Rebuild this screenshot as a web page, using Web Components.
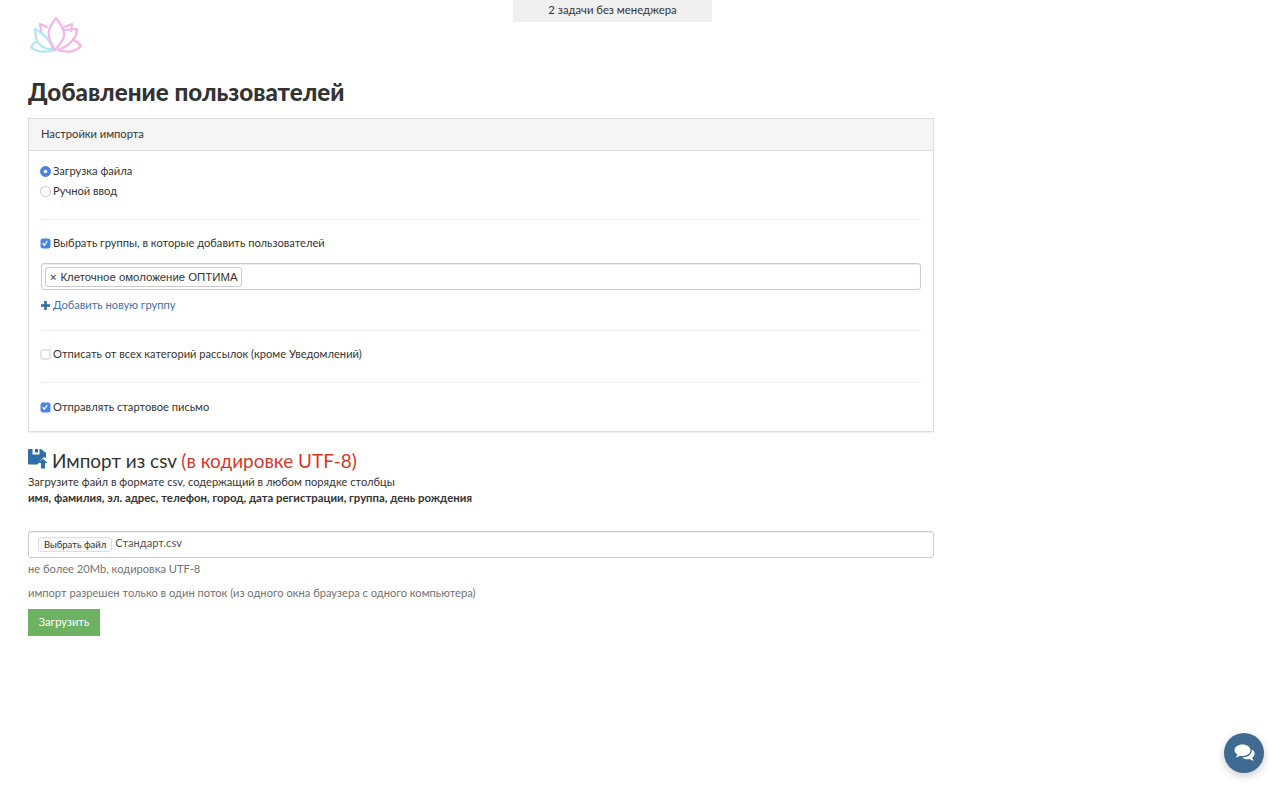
<!DOCTYPE html>
<html lang="ru">
<head>
<meta charset="utf-8">
<title>Добавление пользователей</title>
<style>
    html, body {
        margin: 0;
        background: #fff;
    }
    body {
        font-family: Lato, "Liberation Sans", sans-serif;
        font-size: 11.15px;
        color: #333;
    }
</style>
</head>
<body>
<import-page>
    <task-banner slot="banner">2 задачи без менеджера</task-banner>
    <brand-logo slot="logo"></brand-logo>
    <span slot="title">Добавление пользователей</span>

    <settings-panel heading="Настройки импорта">
        <section-block gap="18">
            <check-row type="radio" checked>Загрузка файла</check-row>
            <check-row type="radio">Ручной ввод</check-row>
        </section-block>
        <section-block gap="14" top="13">
            <check-row type="checkbox" checked>Выбрать группы, в которые добавить пользователей</check-row>
            <tag-input tag="Клеточное омоложение ОПТИМА"></tag-input>
            <add-link>Добавить новую группу</add-link>
        </section-block>
        <section-block gap="18" top="13">
            <check-row type="checkbox">Отписать от всех категорий рассылок (кроме Уведомлений)</check-row>
        </section-block>
        <section-block top="14">
            <check-row type="checkbox" checked>Отправлять стартовое письмо</check-row>
        </section-block>
    </settings-panel>

    <import-form></import-form>
    <chat-button slot="overlay"></chat-button>
</import-page>

<script>
class ImportPage extends HTMLElement {
    constructor() {
        super();
        this.attachShadow({ mode: 'open' });
        this.shadowRoot.innerHTML = `
            <style>
                :host {
                    display: block;
                    padding: 0 346px 0 28px;
                    min-height: 785px;
                    box-sizing: border-box;
                }
                .logo {
                    height: 64px;
                }
                h1 {
                    margin: 0;
                    height: 54px;
                    font-size: 24.2px;
                    line-height: 56px;
                    font-weight: 900;
                    color: #333;
                }
            </style>
            <slot name="banner"></slot>
            <div class="logo"><slot name="logo"></slot></div>
            <h1><slot name="title"></slot></h1>
            <slot></slot>
            <slot name="overlay"></slot>
        `;
    }
}

class TaskBanner extends HTMLElement {
    constructor() {
        super();
        this.attachShadow({ mode: 'open' });
        this.shadowRoot.innerHTML = `
            <style>
                :host {
                    position: absolute;
                    top: 0;
                    left: 513px;
                    width: 199px;
                    height: 22px;
                    background: #f0f0f0;
                    font-size: 11.3px;
                    line-height: 20px;
                    text-align: center;
                    color: #333;
                }
            </style>
            <slot></slot>
        `;
    }
}

class BrandLogo extends HTMLElement {
    constructor() {
        super();
        this.attachShadow({ mode: 'open' });
        this.shadowRoot.innerHTML = `
            <style>
                :host {
                    display: block;
                    padding-top: 15px;
                }
                svg {
                    display: block;
                    margin-left: 1px;
                }
            </style>
            <svg width="54" height="42" viewBox="29 15 54 42" fill="none" stroke-width="2.2" stroke-linejoin="round" stroke-linecap="round">
                <g stroke="#aee6f2">
                    <path d="M35 29 C41 32 49 37 53 49 C46 50 38 46 36 38 Z"/>
                    <path d="M37 41 C34 43 32 45 31 47 C36 52 46 53 54 50"/>
                </g>
                <g stroke="#f5b5e6">
                    <path d="M56 18 C51 24 47 30 49 37 C50 42 53 46 55 50 C58 46 63 42 64 36 C65 30 60 23 56 18 Z"/>
                    <path d="M47 27 L40 24 L41 31"/>
                    <path d="M64 27 L72 24 L71 31"/>
                    <path d="M65 30 L77 29 C77 37 70 46 58 50"/>
                    <path d="M73 40 C76 41 79 43 81 46 C76 52 66 53 58 50"/>
                </g>
            </svg>
        `;
    }
}

class SettingsPanel extends HTMLElement {
    constructor() {
        super();
        this.attachShadow({ mode: 'open' });
        const heading = this.getAttribute('heading') || '';
        this.shadowRoot.innerHTML = `
            <style>
                :host {
                    display: block;
                    border: 1px solid #ddd;
                    box-shadow: 0 1px 1px rgba(0, 0, 0, .05);
                }
                header {
                    height: 31px;
                    padding: 0 12px;
                    background: #f5f5f5;
                    border-bottom: 1px solid #ddd;
                    line-height: 30px;
                    color: #333;
                }
                .body {
                    padding: 10px 12px 14px;
                }
            </style>
            <header>${heading}</header>
            <div class="body"><slot></slot></div>
        `;
    }
}

class SectionBlock extends HTMLElement {
    constructor() {
        super();
        this.attachShadow({ mode: 'open' });
        const gap = this.getAttribute('gap');
        const top = this.getAttribute('top') || 0;
        this.shadowRoot.innerHTML = `
            <style>
                :host {
                    display: block;
                    padding-top: ${top}px;
                    padding-bottom: ${gap || 0}px;
                    ${gap ? 'border-bottom: 1px solid #eee;' : ''}
                }
            </style>
            <slot></slot>
        `;
    }
}

class CheckRow extends HTMLElement {
    constructor() {
        super();
        this.attachShadow({ mode: 'open' });
        const isRadio = this.getAttribute('type') === 'radio';
        const checked = this.hasAttribute('checked');
        let mark = '';
        if (checked && isRadio) {
            mark = '<circle cx="5.5" cy="5.5" r="1.8" fill="#fff"/>';
        } else if (checked) {
            mark = '<path d="M2.6 5.2 L4.4 7.2 L7.2 3" fill="none" stroke="#fff" stroke-width="1.3"/>';
        }
        const fill = checked ? '#4a82e6' : '#fff';
        const stroke = checked ? '#4a82e6' : '#c9c9c9';
        const shape = isRadio
            ? `<circle cx="5.5" cy="5.5" r="5" fill="${fill}" stroke="${stroke}"/>`
            : `<rect x="1" y="1" width="9" height="9" rx="1.5" fill="${fill}" stroke="${stroke}"/>`;
        this.shadowRoot.innerHTML = `
            <style>
                :host {
                    display: flex;
                    align-items: center;
                    gap: 2px;
                    height: 20px;
                }
                svg {
                    flex: none;
                    width: 11px;
                    height: 11px;
                    margin-left: -1px;
                }
                span {
                    padding-bottom: 2px;
                }
            </style>
            <svg viewBox="0 0 11 11">${shape}${mark}</svg>
            <span><slot></slot></span>
        `;
    }
}

class TagInput extends HTMLElement {
    constructor() {
        super();
        this.attachShadow({ mode: 'open' });
        const tag = this.getAttribute('tag') || '';
        this.shadowRoot.innerHTML = `
            <style>
                :host {
                    display: flex;
                    align-items: center;
                    height: 27px;
                    margin-top: 10px;
                    padding: 0 3px;
                    box-sizing: border-box;
                    border: 1px solid #ccc;
                    border-radius: 3px;
                    box-shadow: inset 0 1px 1px rgba(0, 0, 0, .075);
                }
                .tag {
                    display: flex;
                    align-items: center;
                    gap: 4px;
                    height: 18px;
                    padding: 0 3px 0 4px;
                    border: 1px solid #ccc;
                    border-radius: 3px;
                    font-family: "Liberation Sans", sans-serif;
                    font-size: 11.4px;
                }
                .x {
                    font-weight: 700;
                    font-size: 11px;
                    color: #666;
                }
            </style>
            <span class="tag"><span class="x">×</span>${tag}</span>
        `;
    }
}

class AddLink extends HTMLElement {
    constructor() {
        super();
        this.attachShadow({ mode: 'open' });
        this.shadowRoot.innerHTML = `
            <style>
                :host {
                    display: flex;
                    align-items: center;
                    gap: 3px;
                    height: 20px;
                    margin-top: 6px;
                    padding-bottom: 0;
                    color: #3a74ad;
                }
                svg {
                    width: 9px;
                    height: 9px;
                    margin-bottom: 2px;
                }
                span {
                    padding-bottom: 3px;
                }
            </style>
            <svg viewBox="0 0 9 9"><path d="M3.2 0h2.6v3.2H9v2.6H5.8V9H3.2V5.8H0V3.2h3.2z" fill="#2f6ea8"/></svg>
            <span><slot></slot></span>
        `;
    }
}

class ImportForm extends HTMLElement {
    constructor() {
        super();
        this.attachShadow({ mode: 'open' });
        this.shadowRoot.innerHTML = `
            <style>
                :host {
                    display: block;
                    margin-top: 17px;
                }
                h2 {
                    display: flex;
                    align-items: flex-start;
                    gap: 5px;
                    margin: 0 0 1px;
                    height: 24px;
                    font-size: 18.95px;
                    line-height: 24px;
                    font-weight: 400;
                    color: #333;
                }
                h2 em {
                    font-style: normal;
                    color: #d9362b;
                }
                h2 svg {
                    flex: none;
                    width: 19px;
                    height: 20px;
                }
                p {
                    margin: 0;
                    line-height: 16px;
                }
                b {
                    font-weight: 700;
                    font-size: 11.35px;
                    display: block;
                }
                .file {
                    display: flex;
                    align-items: flex-start;
                    gap: 3px;
                    height: 27px;
                    margin-top: 25px;
                    padding: 3px 9px 0;
                    box-sizing: border-box;
                    border: 1px solid #ccc;
                    border-radius: 3px;
                    box-shadow: inset 0 1px 1px rgba(0, 0, 0, .075);
                    line-height: 15px;
                    color: #555;
                }
                .file span {
                    height: 13px;
                    margin-top: 2px;
                    padding: 0 5px;
                    border: 1px solid #ddd;
                    border-radius: 3px;
                    background: #f8f8f8;
                    font-size: 9.45px;
                    line-height: 13px;
                    color: #333;
                }
                .hint {
                    margin-top: 3px;
                    line-height: 16px;
                    color: #737373;
                }
                .hint + .hint {
                    margin-top: 8px;
                }
                button {
                    display: block;
                    width: 72px;
                    height: 27px;
                    margin-top: 8px;
                    padding: 0 0 2px;
                    border: 0;
                    background: #6db262;
                    font: inherit;
                    color: #fff;
                }
            </style>
            <h2>
                <svg viewBox="0 0 19 20">
                    <path d="M0 1 Q0 0 1 0 H4.5 V5.5 H11.5 V0 H13 L18 4 V8.5 H15 L9.5 15.5 H1 Q0 15.5 0 14.5 Z" fill="#2f6ea8"/>
                    <rect x="7" y="0" width="3" height="3.5" fill="#2f6ea8"/>
                    <path d="M15 9.5 L19.5 14 H17 V19.5 H13 V14 H10.5 Z" fill="#2f6ea8"/>
                </svg>
                <span>Импорт из csv <em>(в кодировке UTF-8)</em></span>
            </h2>
            <p>Загрузите файл в формате csv, содержащий в любом порядке столбцы<b>имя, фамилия, эл. адрес, телефон, город, дата регистрации, группа, день рождения</b></p>
            <div class="file"><span>Выбрать файл</span>Стандарт.csv</div>
            <div class="hint">не более 20Mb, кодировка UTF-8</div>
            <div class="hint">импорт разрешен только в один поток (из одного окна браузера с одного компьютера)</div>
            <button type="button">Загрузить</button>
        `;
    }
}

class ChatButton extends HTMLElement {
    constructor() {
        super();
        this.attachShadow({ mode: 'open' });
        this.shadowRoot.innerHTML = `
            <style>
                :host {
                    position: absolute;
                    left: 1224px;
                    top: 733px;
                    width: 40px;
                    height: 40px;
                    border-radius: 50%;
                    background: #3f6a91;
                    box-shadow: 0 3px 8px rgba(0, 0, 0, .2);
                    display: flex;
                    align-items: center;
                    justify-content: center;
                }
            </style>
            <svg width="21" height="18" viewBox="0 0 21 18">
                <path d="M8.5 0.5 C13 0.5 16.5 3 16.5 6.2 C16.5 9.4 13 12 8.5 12 C7.6 12 6.8 11.9 6 11.7 C4.8 12.6 3.3 13.2 1.8 13.3 C2.6 12.4 3.2 11.4 3.4 10.3 C1.6 9.3 0.5 7.8 0.5 6.2 C0.5 3 4 0.5 8.5 0.5 Z" fill="#fff"/>
                <path d="M17.8 5.6 C19.6 6.6 20.6 8.1 20.6 9.8 C20.6 11.4 19.6 12.8 18.2 13.7 C18.4 14.8 19 15.8 19.7 16.6 C18.3 16.5 16.9 16 15.8 15 C15 15.2 14.2 15.3 13.4 15.3 C11.2 15.3 9.2 14.6 8 13.5 C13.5 13.7 18.3 10.5 17.8 5.6 Z" fill="#fff"/>
            </svg>
        `;
    }
}

customElements.define('import-page', ImportPage);
customElements.define('task-banner', TaskBanner);
customElements.define('brand-logo', BrandLogo);
customElements.define('settings-panel', SettingsPanel);
customElements.define('section-block', SectionBlock);
customElements.define('check-row', CheckRow);
customElements.define('tag-input', TagInput);
customElements.define('add-link', AddLink);
customElements.define('import-form', ImportForm);
customElements.define('chat-button', ChatButton);
</script>
</body>
</html>
